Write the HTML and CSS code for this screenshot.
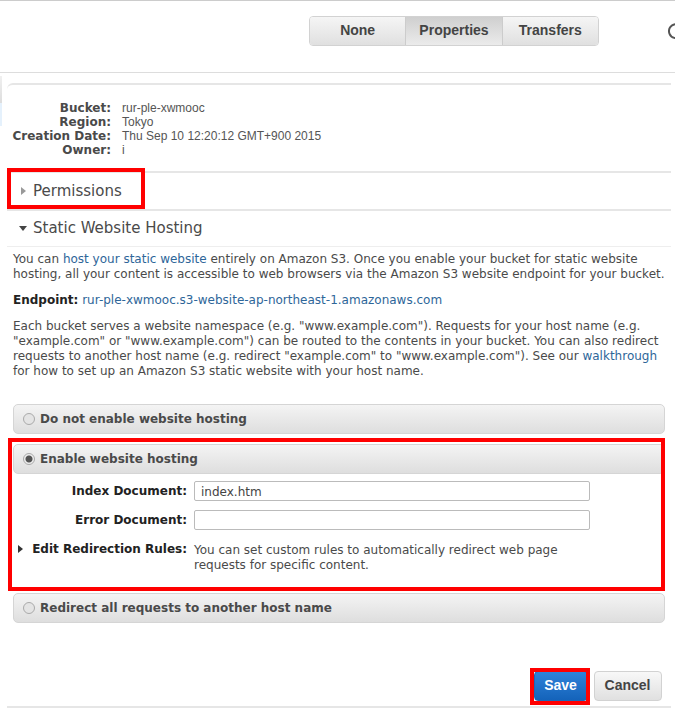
FILE: index.html
```html
<!DOCTYPE html>
<html lang="en">
<head>
<meta charset="utf-8">
<title>Bucket properties</title>
<link rel="stylesheet" href="styles.css">
</head>
<body>
<header class="topbar">
  <nav class="tabs">
    <button type="button" class="tab">None</button>
    <button type="button" class="tab active">Properties</button>
    <button type="button" class="tab">Transfers</button>
  </nav>
  <button type="button" class="refresh" aria-label="Refresh">
    <svg width="16" height="16" viewBox="0 0 16 16"><path d="M13 3.2A7 7 0 1 0 15 8" fill="none" stroke="#555" stroke-width="2"/><path d="M15.500 1v5.500H10z" fill="#555"/></svg>
  </button>
</header>
<div class="workspace">
  <aside class="list-edge"><div class="list-head"></div><div class="list-row"></div></aside>
  <main class="panel">
    <dl class="meta">
      <dt>Bucket:</dt><dd>rur-ple-xwmooc</dd>
      <dt>Region:</dt><dd>Tokyo</dd>
      <dt>Creation Date:</dt><dd>Thu Sep 10 12:20:12 GMT+900 2015</dd>
      <dt>Owner:</dt><dd>i</dd>
    </dl>
    <h2 class="section permissions">
      <svg class="arrow" width="6" height="8" viewBox="0 0 6 8"><path d="M0 0L5 4L0 8z" fill="#999"/></svg>Permissions
      <span class="mark"></span>
    </h2>
    <h2 class="section hosting">
      <svg class="arrow" width="8" height="5" viewBox="0 0 8 5"><path d="M0 0H8L4 5z" fill="#444"/></svg>Static Website Hosting
    </h2>
    <div class="content">
      <p>You can <a href="#">host your static website</a> entirely on Amazon S3. Once you enable your bucket for static website<br>hosting, all your content is accessible to web browsers via the Amazon S3 website endpoint for your bucket.</p>
      <p><b>Endpoint:</b> <a href="#">rur-ple-xwmooc.s3-website-ap-northeast-1.amazonaws.com</a></p>
      <p>Each bucket serves a website namespace (e.g. "www.example.com"). Requests for your host name (e.g.<br>"example.com" or "www.example.com") can be routed to the contents in your bucket. You can also redirect<br>requests to another host name (e.g. redirect "example.com" to "www.example.com"). See our <a href="#">walkthrough</a><br>for how to set up an Amazon S3 static website with your host name.</p>
      <form class="options">
        <label class="bar"><input type="radio" name="mode">Do not enable website hosting</label>
        <div class="enabled">
          <label class="bar"><input type="radio" name="mode" checked>Enable website hosting</label>
          <div class="fields">
            <label for="index-doc">Index Document:</label>
            <input type="text" id="index-doc" value="index.htm">
            <label for="error-doc">Error Document:</label>
            <input type="text" id="error-doc">
            <div class="rules"><svg width="6" height="8" viewBox="0 0 6 8"><path d="M0 0L5 4L0 8z" fill="#333"/></svg>Edit Redirection Rules:</div>
            <div class="hint">You can set custom rules to automatically redirect web page requests for specific content.</div>
          </div>
          <span class="mark"></span>
        </div>
        <label class="bar"><input type="radio" name="mode">Redirect all requests to another host name</label>
        <div class="actions">
          <span class="save-wrap"><button type="button" class="btn save">Save</button><span class="mark"></span></span>
          <button type="button" class="btn">Cancel</button>
        </div>
      </form>
    </div>
  </main>
</div>
</body>
</html>
```
FILE: styles.css
```css
* { box-sizing: border-box; }
body {
  margin: 0;
  background: #fff;
  color: #4a4a4a;
  font: 12px/15px "DejaVu Sans", sans-serif;
  overflow-x: hidden;
}
a { color: #2e6699; text-decoration: none; }
p { margin: 0; white-space: nowrap; }
b { color: #222; }

.topbar {
  display: flex;
  align-items: flex-start;
  justify-content: flex-end;
  gap: 69px;
  height: 73px;
  padding-top: 15px;
  border-top: 1px solid #ccc;
  border-bottom: 1px solid #ddd;
}
.tabs {
  display: flex;
  width: 290px;
  height: 30px;
  border: 1px solid #d2d2d2;
  border-radius: 4px;
  overflow: hidden;
}
.tab {
  flex: 1;
  padding: 0 0 2px;
  border: 0;
  background: linear-gradient(#f5f5f5, #e0e0e0);
  color: #444;
  font: bold 14px/16px "Liberation Sans", sans-serif;
}
.tab.active {
  border: 1px solid #ccc;
  border-width: 0 1px;
  background: linear-gradient(#cfcfcf, #ebebeb);
}
.refresh {
  width: 16px;
  height: 30px;
  margin-right: -9px;
  padding: 0;
  border: 0;
  background: none;
}
.refresh svg { display: block; }

.workspace {
  display: grid;
  grid-template-columns: 2px 1fr;
  padding-top: 3px;
}
.list-head { height: 27px; background: linear-gradient(#f0f0f0, #ddd); }
.list-row { height: 23px; background: #e5f1fc; }
.panel {
  padding: 7px 5px 0;
  border-right: 1px solid #e8e8e8;
}
.meta {
  display: grid;
  grid-template-columns: 104px 1fr;
  column-gap: 11px;
  margin: 0;
  padding: 16px 0 14px;
  border-top: 2px solid #e6e6e6;
  border-top-left-radius: 6px;
  line-height: 14px;
}
.meta dt { font-weight: bold; text-align: right; white-space: nowrap; }
.meta dd {
  margin: 0;
  color: #555;
  font: 12px/14px "Liberation Sans", sans-serif;
}

.section {
  display: flex;
  align-items: center;
  position: relative;
  height: 38px;
  margin: 0;
  padding-left: 14px;
  border-top: 2px solid #e6e6e6;
  font-size: 15px;
  font-weight: normal;
}
.arrow { flex: none; margin-right: 6px; }
.hosting { padding-left: 12px; border-bottom: 1px solid #eee; }

.mark {
  position: absolute;
  border: 4px solid #f00;
  pointer-events: none;
}
.permissions .mark { left: 0; top: -5px; width: 138px; height: 41px; }

.content {
  display: grid;
  gap: 11px;
  padding: 5px 6px 5px;
  border-bottom: 2px solid #e6e6e6;
}
.options { display: grid; gap: 10px; margin-top: 14px; }
.bar {
  display: flex;
  align-items: center;
  height: 30px;
  padding: 1px 9px 0;
  border: 1px solid #d5d5d5;
  border-radius: 5px;
  background: linear-gradient(#f4f4f4, #dedede);
  font-weight: bold;
}
.bar input {
  appearance: none;
  width: 12px;
  height: 12px;
  margin: 0 5px 2px 0;
  border: 1px solid #aaa;
  border-radius: 50%;
  background: #e4e4e4;
}
.bar input:checked { background: radial-gradient(circle, #555 3px, #eee 4px); }
.enabled { position: relative; height: 139px; }
.enabled > .mark { left: -5px; right: 0; top: -6px; height: 153px; }
.fields {
  display: grid;
  grid-template-columns: 174px minmax(0, 396px);
  align-items: center;
  gap: 9px 7px;
  margin-top: 7px;
}
.fields label, .rules { color: #222; font-weight: bold; text-align: right; white-space: nowrap; }
.fields input {
  width: 100%;
  height: 20px;
  padding: 1px 6px 0;
  border: 1px solid #bbb;
  border-radius: 2px;
  background: #fff;
  color: #444;
  font: inherit;
}
.rules { align-self: start; padding-top: 3px; }
.rules svg { margin-right: 8px; }
.hint { max-width: 375px; padding-top: 4px; }

.actions {
  display: flex;
  justify-content: flex-end;
  gap: 6px;
  margin-top: 38px;
  padding-right: 3px;
}
.save-wrap { position: relative; }
.save-wrap .mark { left: -4px; top: -3px; width: 60px; height: 37px; }
.btn {
  display: block;
  width: 68px;
  height: 30px;
  padding: 0 0 2px;
  border: 1px solid #d2d2d2;
  border-radius: 4px;
  background: linear-gradient(#f8f8f8, #e0e0e0);
  color: #444;
  font: bold 14px/16px "Liberation Sans", sans-serif;
}
.save {
  width: 54px;
  border-color: #1b68b8;
  background: linear-gradient(#2f83da, #1463ba);
  color: #fff;
}
```
